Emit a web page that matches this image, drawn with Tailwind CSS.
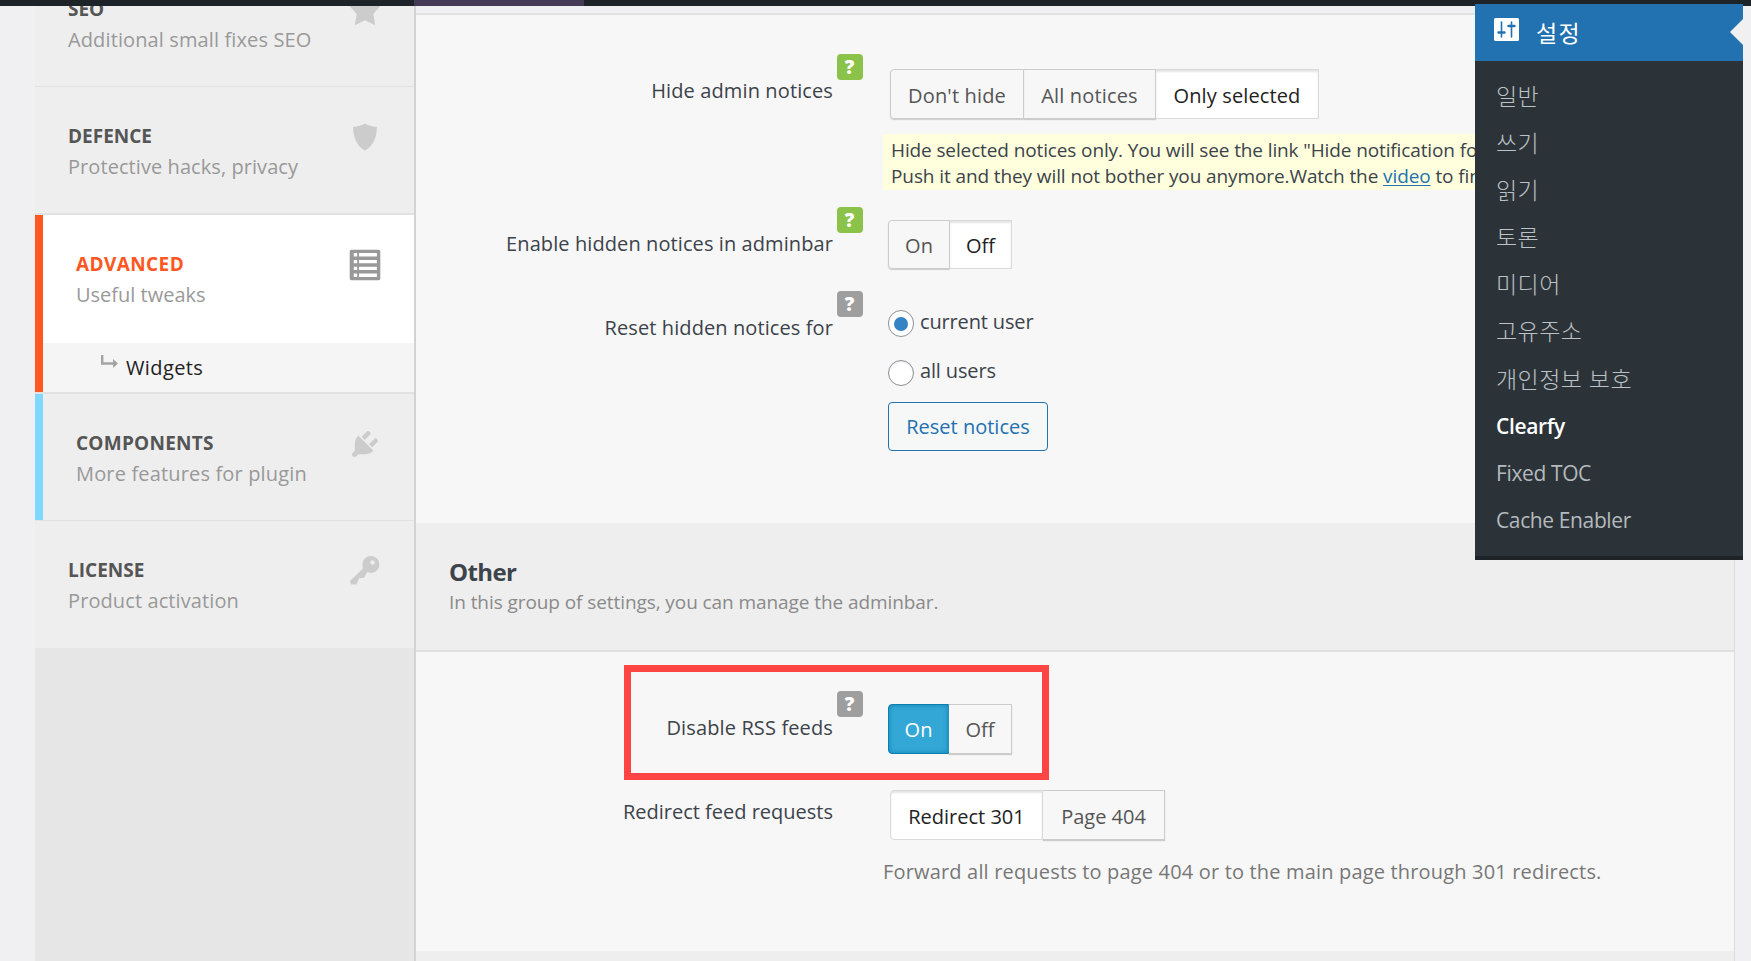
<!DOCTYPE html>
<html lang="ko">
<head>
  <meta charset="utf-8" />
  <title>Clearfy</title>
  <script src="https://cdn.jsdelivr.net/npm/@tailwindcss/browser@4"></script>
</head>
<body class="bg-[#f0f0f3]">
<div class="relative flex flex-col w-[1751px] h-[961px] overflow-hidden font-['Open_Sans','Noto_Sans_CJK_KR',sans-serif] text-[20px] leading-[30px] text-[#3c434a]">
  <!-- Admin bar -->
  <div class="relative z-10 flex h-[6px] shrink-0 bg-[#1d2327]">
    <div class="ml-[414px] w-[170px] bg-[#453a56]"></div>
  </div>

  <div class="flex grow min-h-0 pl-[35px]">
    <!-- Tabs -->
    <nav class="w-[381px] shrink-0 overflow-hidden bg-[#e6e6e6] border-r-2 border-[#d3d3d3]">
      <div class="-mt-[46px] flex flex-col">
        <a class="flex justify-between h-[127px] pl-[33px] pr-[32px] pt-[33px] bg-[#eee] border-b border-[#e2e2e2]">
          <div>
            <div class="pt-[2px] text-[19px] leading-[29px] font-bold text-[#555]">SEO</div>
            <div class="leading-[31px] tracking-[0.12px] text-[#999]">Additional small fixes SEO</div>
          </div>
          <svg class="w-[34px] h-[34px] text-[#ccc]" viewBox="0 0 20 20" fill="currentColor"><path d="M10 1l3 6 6 .75-4.12 4.62L16 19l-6-3-6 3 1.13-6.63L1 7.75 7 7z"/></svg>
        </a>
        <a class="flex justify-between h-[128px] pl-[33px] pr-[32px] pt-[33px] bg-[#eee] border-b-2 border-[#e2e2e2]">
          <div>
            <div class="pt-[2px] text-[19px] leading-[29px] font-bold text-[#555]">DEFENCE</div>
            <div class="leading-[31px] tracking-[0.07px] text-[#999]">Protective hacks, privacy</div>
          </div>
          <svg class="w-[34px] h-[34px] text-[#ccc]" viewBox="0 0 20 20" fill="currentColor"><path d="M10 2s3 2 7 2c0 11-7 14-7 14S3 15 3 4c4 0 7-2 7-2z"/></svg>
        </a>
        <div class="border-l-8 border-[#ff5722]">
          <a class="flex justify-between h-[128px] pl-[33px] pr-[32px] pt-[33px] bg-white">
            <div>
              <div class="pt-[2px] text-[19px] leading-[29px] tracking-[0.4px] font-bold text-[#ff5722]">ADVANCED</div>
              <div class="leading-[31px] text-[#999]">Useful tweaks</div>
            </div>
            <svg class="w-[34px] h-[34px] text-[#999]" viewBox="0 0 20 20" fill="currentColor"><path fill-rule="evenodd" d="M2 1h16a1 1 0 0 1 1 1v16a1 1 0 0 1-1 1H2a1 1 0 0 1-1-1V2a1 1 0 0 1 1-1zM3.4 3v2h2V3zM6.5 3v2H17V3zM3.4 7v2h2V7zM6.5 7v2H17V7zM3.4 11v2h2v-2zM6.5 11v2H17v-2zM3.4 15v2h2v-2zM6.5 15v2H17v-2z"/></svg>
          </a>
          <a class="flex h-[49px] pl-[58px] pt-[10px] bg-[#f5f5f5] text-[#222]">
            <svg class="mt-[2px] mr-[8px] w-[17px] h-[13px] text-[#a3a3a3]" viewBox="0 0 17 13" fill="none" stroke="currentColor" stroke-width="2.4"><path d="M1.2 0v8.500H13"/><path d="M12 4l5 4.500-5 4.500z" fill="currentColor" stroke="none"/></svg>
            <span class="tracking-[0.4px]">Widgets</span>
          </a>
        </div>
        <div class="h-[2px] bg-[#e2e2e2]"></div>
        <a class="flex justify-between h-[126px] pl-[33px] pr-[32px] pt-[33px] bg-[#eee] border-l-8 border-l-[#80d8ff]">
          <div>
            <div class="pt-[2px] text-[19px] leading-[29px] tracking-[0.25px] font-bold text-[#555]">COMPONENTS</div>
            <div class="leading-[31px] tracking-[0.16px] text-[#999]">More features for plugin</div>
          </div>
          <svg class="w-[34px] h-[34px] text-[#ccc]" viewBox="0 0 20 20" fill="currentColor"><path d="M13.11 4.36L9.87 7.6 8 5.73l3.24-3.24c.35-.34 1.05-.2 1.56.32.52.51.66 1.21.31 1.55zm-8 1.77l.91-1.12 9.01 9.01-1.19.84c-.71.71-2.63 1.16-3.82 1.16H6.14L4.9 17.26c-.59.59-1.54.59-2.12 0-.59-.58-.59-1.53 0-2.12l1.24-1.24v-3.88c0-1.13.4-3.19 1.09-3.89zm7.26 3.97l3.24-3.24c.34-.35 1.04-.21 1.55.31.52.51.66 1.21.31 1.55l-3.24 3.25z"/></svg>
        </a>
        <a class="flex justify-between h-[128px] pl-[33px] pr-[32px] pt-[33px] bg-[#eee] border-t border-[#e2e2e2]">
          <div>
            <div class="pt-[2px] text-[19px] leading-[29px] font-bold text-[#555]">LICENSE</div>
            <div class="leading-[31px] tracking-[0.1px] text-[#999]">Product activation</div>
          </div>
          <svg class="w-[34px] h-[34px] text-[#ccc]" viewBox="0 0 20 20" fill="currentColor"><path d="M16.95 2.58c1.96 1.95 1.96 5.12 0 7.07-1.51 1.51-3.75 1.84-5.59 1.01l-1.87 3.31-2.99.31L5 18H2l-1-2 7.95-7.69c-.92-1.87-.62-4.18.93-5.73 1.95-1.96 5.12-1.96 7.07 0zm-2.51 3.79c.74 0 1.33-.6 1.33-1.34 0-.73-.59-1.33-1.33-1.33-.73 0-1.33.6-1.33 1.33 0 .74.6 1.34 1.33 1.34z"/></svg>
        </a>
      </div>
    </nav>

    <!-- Settings -->
    <main class="flex flex-col w-[1319px] shrink-0 bg-[#f7f7f7] border-r border-[#dcdcde]">
      <div class="h-[9px] shrink-0 bg-[#f0f0f2] border-b-2 border-[#e2e2e2]"></div>

      <section class="h-[508px] shrink-0 pt-[39px]">
        <div class="flex items-start h-[153px]">
          <div class="w-[417px] mt-[22px] text-right tracking-[0.12px]">Hide admin notices</div>
          <span class="ml-[4px] w-[26px] h-[26px] rounded-[4px] bg-[#8bc34a] pr-px text-center text-[19px] leading-[27px] font-extrabold text-white">?</span>
          <div class="ml-[20px] pt-[15px]">
            <div class="flex ml-[7px] h-[50px] leading-[50px] text-[#555]">
              <div class="w-[134px] pt-px border border-[#ccc] rounded-l-[4px] shadow-[0_1px_1px_#ccc] text-center tracking-[0.15px]">Don't hide</div>
              <div class="w-[132px] pt-px border border-l-0 border-[#ccc] shadow-[0_1px_1px_#ccc] text-center tracking-[0.15px]">All notices</div>
              <div class="w-[163px] pt-px border border-l-0 border-[#dadada] bg-white shadow-[inset_0_2px_2px_#e4e4e4] text-center tracking-[0.12px] text-[#222]">Only selected</div>
            </div>
            <div class="w-[592px] h-[56px] mt-[15px] pl-[8px] pt-[3px] overflow-hidden bg-[#ffffdd] text-[19px] leading-[26px] tracking-[-0.12px] whitespace-nowrap">
              <p>Hide selected notices only. You will see the link "Hide notification for</p>
              <p class="tracking-[-0.1px]">Push it and they will not bother you anymore.Watch the <a class="text-[#2271b1] underline underline-offset-2">video</a> to find</p>
            </div>
          </div>
        </div>

        <div class="flex items-start h-[84px]">
          <div class="w-[417px] mt-[22px] text-right tracking-[0.09px]">Enable hidden notices in adminbar</div>
          <span class="ml-[4px] w-[26px] h-[26px] rounded-[4px] bg-[#8bc34a] pr-px text-center text-[19px] leading-[27px] font-extrabold text-white">?</span>
          <div class="flex ml-[25px] mt-[13px] h-[49px] leading-[49px] text-[#555]">
            <div class="w-[62px] border border-[#ccc] rounded-l-[4px] shadow-[0_1px_1px_#ccc] text-center">On</div>
            <div class="w-[62px] border border-l-0 border-[#dadada] bg-white shadow-[inset_0_2px_2px_#e4e4e4] text-center text-[#222]">Off</div>
          </div>
        </div>

        <div class="flex items-start">
          <div class="w-[417px] mt-[22px] text-right tracking-[0.1px]">Reset hidden notices for</div>
          <span class="ml-[4px] w-[26px] h-[26px] rounded-[4px] bg-[#9e9e9e] pr-px text-center text-[19px] leading-[27px] font-extrabold text-white">?</span>
          <div class="ml-[25px] mt-[16px] tracking-[-0.15px]">
            <label class="flex">
              <span class="flex items-center justify-center mt-[3px] mr-[6px] w-[26px] h-[27px] rounded-full border border-[#8c8f94] bg-white"><span class="w-[14px] h-[14px] rounded-full bg-[#3582c4]"></span></span>
              current user
            </label>
            <label class="flex mt-[19px]">
              <span class="mt-[4px] mr-[6px] w-[26px] h-[26px] rounded-full border border-[#8c8f94] bg-white shadow-[inset_0_1px_2px_rgba(0,0,0,0.1)]"></span>
              all users
            </label>
            <button class="block mt-[16px] w-[160px] h-[49px] rounded-[4px] border border-[#2271b1] bg-[#f6f7f7] tracking-normal text-[#2271b1]">Reset notices</button>
          </div>
        </div>
      </section>

      <header class="h-[129px] shrink-0 pl-[33px] pt-[33px] bg-[#eee] border-b-2 border-[#e0e0e0]">
        <h2 class="text-[24px] leading-[32px] tracking-[-0.6px] font-bold">Other</h2>
        <p class="mt-px text-[19px] leading-[27px] tracking-[-0.08px] text-[#8a8a8a]">In this group of settings, you can manage the adminbar.</p>
      </header>

      <section class="h-[299px] shrink-0 pt-[13px]">
        <div class="flex items-start ml-[208px] w-[425px] h-[115px] border-7 border-[#ff4444] pt-[19px]">
          <div class="w-[202px] mt-[22px] text-right tracking-[0.13px]">Disable RSS feeds</div>
          <span class="ml-[4px] w-[26px] h-[26px] rounded-[4px] bg-[#9e9e9e] pr-px text-center text-[19px] leading-[27px] font-extrabold text-white">?</span>
          <div class="flex ml-[25px] mt-[13px] h-[50px] leading-[49px] text-[#555]">
            <div class="w-[61px] border border-[#0d7eae] rounded-l-[4px] bg-[#33a8d6] shadow-[inset_0_0_5px_#0e86b8] text-center text-white">On</div>
            <div class="w-[63px] border border-l-0 border-[#ccc] shadow-[0_1px_1px_#ccc] text-center">Off</div>
          </div>
        </div>
        <div class="flex items-start mt-[10px]">
          <div class="w-[417px] mt-[7px] text-right">Redirect feed requests</div>
          <div class="ml-[50px]">
            <div class="flex ml-[7px] h-[50px] leading-[50px] text-[#555]">
              <div class="w-[153px] pt-px border border-[#dadada] rounded-l-[4px] bg-white shadow-[inset_0_2px_2px_#e4e4e4] text-center text-[#222]">Redirect 301</div>
              <div class="w-[122px] pt-px border border-l-0 border-[#ccc] shadow-[0_1px_1px_#ccc] text-center">Page 404</div>
            </div>
            <p class="mt-[17px] tracking-[0.17px] text-[#777]">Forward all requests to page 404 or to the main page through 301 redirects.</p>
          </div>
        </div>
      </section>

      <div class="grow bg-[#eee]"></div>
    </main>
  </div>

  <!-- Settings flyout, lies over the page -->
  <aside class="absolute z-20 left-[1475px] top-0 w-[268px] h-[560px] bg-[#1d2327]">
    <div class="flex items-start mt-[4px] h-[57px] bg-[#2271b1] pl-[19px] pt-[14px] text-white">
      <svg class="w-[25px] h-[23px]" viewBox="0 0 25 23"><rect width="25" height="23" rx="1.5" fill="#fff"/><g fill="none" stroke="#2271b1" stroke-linecap="round"><path stroke-width="1.6" d="M7.500 4v15M17.500 4v15"/><path stroke-width="2.4" d="M4.500 14.500h6M14.500 8h6"/></g></svg>
      <span class="-mt-[2px] ml-[17px] text-[23px] leading-[34px] tracking-[1.4px]">설정</span>
    </div>
    <svg class="absolute right-0 top-[19px] w-[13px] h-[26px]" viewBox="0 0 13 26"><path d="M13 0v26L0 13z" fill="#f0f0f1"/></svg>
    <ul class="h-[495px] bg-[#2c3338] pl-[21px] pt-[12px] text-[23px] leading-[47.1px] tracking-[0.45px] font-light text-[#bcc1c6]">
      <li>일반</li>
      <li>쓰기</li>
      <li>읽기</li>
      <li>토론</li>
      <li>미디어</li>
      <li>고유주소</li>
      <li>개인정보 보호</li>
      <li class="text-[21px] tracking-[-0.35px] font-semibold text-white">Clearfy</li>
      <li class="text-[21px] tracking-[-0.38px] font-normal text-[#b4b9be]">Fixed TOC</li>
      <li class="text-[21px] tracking-[-0.38px] font-normal text-[#b4b9be]">Cache Enabler</li>
    </ul>
  </aside>
</div>
</body>
</html>
